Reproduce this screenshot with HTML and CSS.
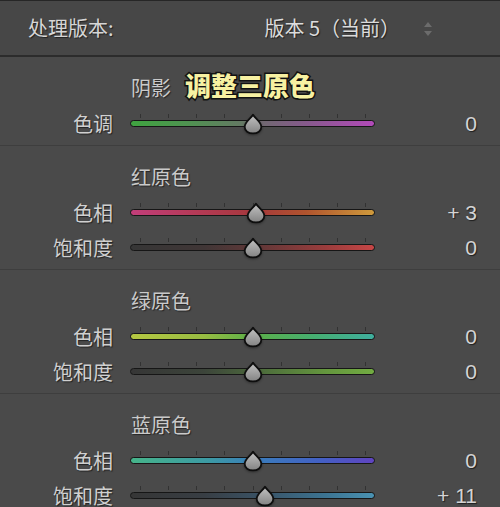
FILE: index.html
```html
<!DOCTYPE html>
<html lang="zh">
<head>
<meta charset="utf-8">
<title>三原色</title>
<link rel="stylesheet" href="styles.css">
</head>
<body>
<div class="panel">
  <div class="header">
    <span class="h-label">处理版本:</span>
    <span class="h-value">版本 5（当前）</span>
    <svg class="updown" width="8" height="14" viewBox="0 0 8 14"><path d="M4 0 L8 5 L0 5 Z M0 9 L8 9 L4 14 Z" fill="#6c6c6c"/></svg>
  </div>

  <section class="group">
    <div class="title">阴影<span class="callout">调整三原色</span></div>
    <div class="row">
      <span class="label">色调</span>
      <div class="slider">
        <div class="ticks"><i></i><i></i><i></i><i></i><i></i><i></i><i></i><i></i><i></i></div>
        <div class="track t-tone"></div>
        <svg class="thumb" style="--v:0" width="20" height="22" viewBox="-1 -1 20 22"><use href="#drop"/></svg>
      </div>
      <span class="value">0</span>
    </div>
  </section>

  <section class="group">
    <div class="title">红原色</div>
    <div class="row">
      <span class="label">色相</span>
      <div class="slider">
        <div class="ticks"><i></i><i></i><i></i><i></i><i></i><i></i><i></i><i></i><i></i></div>
        <div class="track t-red-hue"></div>
        <svg class="thumb" style="--v:3" width="20" height="22" viewBox="-1 -1 20 22"><use href="#drop"/></svg>
      </div>
      <span class="value">+ 3</span>
    </div>
    <div class="row">
      <span class="label">饱和度</span>
      <div class="slider">
        <div class="ticks"><i></i><i></i><i></i><i></i><i></i><i></i><i></i><i></i><i></i></div>
        <div class="track t-red-sat"></div>
        <svg class="thumb" style="--v:0" width="20" height="22" viewBox="-1 -1 20 22"><use href="#drop"/></svg>
      </div>
      <span class="value">0</span>
    </div>
  </section>

  <section class="group">
    <div class="title">绿原色</div>
    <div class="row">
      <span class="label">色相</span>
      <div class="slider">
        <div class="ticks"><i></i><i></i><i></i><i></i><i></i><i></i><i></i><i></i><i></i></div>
        <div class="track t-green-hue"></div>
        <svg class="thumb" style="--v:0" width="20" height="22" viewBox="-1 -1 20 22"><use href="#drop"/></svg>
      </div>
      <span class="value">0</span>
    </div>
    <div class="row">
      <span class="label">饱和度</span>
      <div class="slider">
        <div class="ticks"><i></i><i></i><i></i><i></i><i></i><i></i><i></i><i></i><i></i></div>
        <div class="track t-green-sat"></div>
        <svg class="thumb" style="--v:0" width="20" height="22" viewBox="-1 -1 20 22"><use href="#drop"/></svg>
      </div>
      <span class="value">0</span>
    </div>
  </section>

  <section class="group">
    <div class="title">蓝原色</div>
    <div class="row">
      <span class="label">色相</span>
      <div class="slider">
        <div class="ticks"><i></i><i></i><i></i><i></i><i></i><i></i><i></i><i></i><i></i></div>
        <div class="track t-blue-hue"></div>
        <svg class="thumb" style="--v:0" width="20" height="22" viewBox="-1 -1 20 22"><use href="#drop"/></svg>
      </div>
      <span class="value">0</span>
    </div>
    <div class="row">
      <span class="label">饱和度</span>
      <div class="slider">
        <div class="ticks"><i></i><i></i><i></i><i></i><i></i><i></i><i></i><i></i><i></i></div>
        <div class="track t-blue-sat"></div>
        <svg class="thumb" style="--v:11" width="20" height="22" viewBox="-1 -1 20 22"><use href="#drop"/></svg>
      </div>
      <span class="value">+ 11</span>
    </div>
  </section>
</div>

<svg class="defs" width="0" height="0">
  <defs>
    <linearGradient id="dropfill" x1="0" y1="0" x2="0" y2="1">
      <stop offset="0" stop-color="#c2c2c2"/>
      <stop offset="1" stop-color="#838383"/>
    </linearGradient>
    <path id="drop" d="M9 0.8 C11 4.4 17.3 8 17.3 13 C17.3 16.9 13.6 19.4 9 19.4 C4.4 19.4 0.7 16.9 0.7 13 C0.7 8 7 4.4 9 0.8 Z" fill="url(#dropfill)" stroke="#0e0e0e" stroke-width="1.8" stroke-linejoin="round"/>
  </defs>
</svg>
</body>
</html>
```

FILE: styles.css
```css
html, body {
  margin: 0;
  padding: 0;
  background: #4a4a4a;
}
body {
  width: 500px;
  height: 507px;
  overflow: hidden;
  font-family: "Noto Sans CJK SC", "Noto Sans", sans-serif;
  color: #d2d2d2;
}
.panel {
  width: 500px;
}
.header {
  height: 54px;
  border-top: 1px solid #262626;
  border-bottom: 2px solid #2c2c2c;
  background: #474747;
  display: flex;
  align-items: center;
  padding: 0 68px 0 28px;
  font-size: 20px;
  line-height: 24px;
  text-shadow: 1px 1px 1px rgba(0,0,0,0.55);
}
.h-label {
  color: #d6d6d6;
}
.h-value {
  margin-left: auto;
  color: #dcdcdc;
}
.updown {
  margin-left: 24px;
  margin-top: 1px;
}
.group {
  padding: 19px 0 4px;
  border-bottom: 1px solid #3e3e3e;
}
.title {
  display: flex;
  align-items: center;
  height: 24px;
  padding-left: 131px;
  margin-bottom: 6px;
  font-size: 20px;
  line-height: 24px;
  color: #cacaca;
  text-shadow: 1px 1px 1px rgba(0,0,0,0.5);
}
.callout {
  margin-left: 14px;
  margin-bottom: 6px;
  font-size: 26px;
  line-height: 30px;
  font-weight: 900;
  color: #f7f1a2;
  -webkit-text-stroke: 3px #121212;
  paint-order: stroke fill;
  text-shadow: none;
}
.row {
  display: grid;
  grid-template-columns: 113px 245px 1fr;
  column-gap: 17px;
  align-items: center;
  height: 35px;
}
.label {
  text-align: right;
  font-size: 20px;
  line-height: 20px;
  color: #d0d0d0;
  text-shadow: 1px 1px 1px rgba(0,0,0,0.55);
}
.value {
  text-align: right;
  padding-right: 23px;
  font-family: "Liberation Sans", Arial, sans-serif;
  font-size: 21px;
  line-height: 20px;
  color: #d4d4d4;
  text-shadow: 1px 1px 1px rgba(0,0,0,0.6);
}
.slider {
  position: relative;
  height: 35px;
}
.ticks {
  position: absolute;
  left: 10px;
  width: 226px;
  top: 8px;
  height: 4px;
  display: flex;
  justify-content: space-between;
}
.ticks i {
  display: block;
  width: 1px;
  height: 4px;
  background: #323232;
}
.track {
  position: absolute;
  left: 0;
  right: 0;
  top: 14px;
  height: 5px;
  border: 1px solid #161616;
  border-radius: 4px;
}
.t-tone {
  background: linear-gradient(90deg, #3fa440 0%, #4e9450 22%, #637a63 45%, #6e6a6e 52%, #865a8c 72%, #b24ab9 100%);
}
.t-red-hue {
  background: linear-gradient(90deg, #c23e7a 0%, #b43a55 28%, #a6383d 50%, #b0542e 72%, #cf9a3c 100%);
}
.t-red-sat {
  background: linear-gradient(90deg, #363636 0%, #403636 30%, #663838 55%, #9a3c3c 80%, #c64646 100%);
}
.t-green-hue {
  background: linear-gradient(90deg, #b6c842 0%, #98bc42 30%, #5cb048 50%, #46ae70 75%, #3fae9e 100%);
}
.t-green-sat {
  background: linear-gradient(90deg, #363636 0%, #3c443a 30%, #4e6e3c 55%, #64963e 80%, #72ac42 100%);
}
.t-blue-hue {
  background: linear-gradient(90deg, #46b48a 0%, #3c9aa4 32%, #3a7cbc 52%, #4360c4 78%, #6044c0 100%);
}
.t-blue-sat {
  background: linear-gradient(90deg, #363636 0%, #383e44 30%, #3a5468 55%, #3c7492 80%, #4a92b2 100%);
}
.thumb {
  position: absolute;
  top: 7px;
  left: calc(50% + var(--v) * 1.1px - 10px);
  display: block;
  filter: drop-shadow(0 1px 1px rgba(0,0,0,0.35));
}
.defs {
  position: absolute;
  width: 0;
  height: 0;
  overflow: hidden;
}
```
